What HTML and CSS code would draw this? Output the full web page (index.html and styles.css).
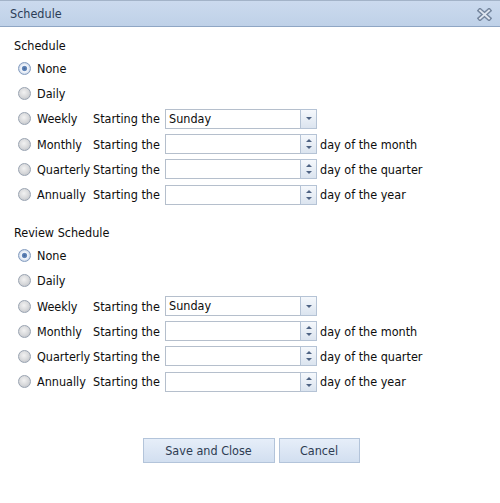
FILE: index.html
```html
<!DOCTYPE html>
<html>
<head>
<meta charset="utf-8">
<link rel="stylesheet" href="styles.css">
</head>
<body>
<div class="window">
  <div class="header">
    <span class="title">Schedule</span>
    <svg class="close" width="15" height="13" viewBox="0 0 15 13">
      <path d="M3 2.5 L12 10.5 M12 2.5 L3 10.5" stroke="#75869e" stroke-width="4.6" stroke-linecap="square" fill="none"/>
      <path d="M3 2.5 L12 10.5 M12 2.5 L3 10.5" stroke="#dfe6f0" stroke-width="1.8" stroke-linecap="square" fill="none"/>
    </svg>
  </div>
  <div class="body">
    <div class="section">
      <div class="section-label">Schedule</div>
      <div class="rows">
        <div class="row"><span class="radio checked"></span><span class="opt">None</span></div>
        <div class="row"><span class="radio"></span><span class="opt">Daily</span></div>
        <div class="row"><span class="radio"></span><span class="opt">Weekly</span><span class="start">Starting the</span><span class="field"><span class="text">Sunday</span><span class="trigger combo"><i class="down"></i></span></span></div>
        <div class="row"><span class="radio"></span><span class="opt">Monthly</span><span class="start">Starting the</span><span class="field"><span class="text"></span><span class="trigger spin"><i class="up"></i><i class="down"></i></span></span><span class="suffix">day of the month</span></div>
        <div class="row"><span class="radio"></span><span class="opt">Quarterly</span><span class="start">Starting the</span><span class="field"><span class="text"></span><span class="trigger spin"><i class="up"></i><i class="down"></i></span></span><span class="suffix">day of the quarter</span></div>
        <div class="row"><span class="radio"></span><span class="opt">Annually</span><span class="start">Starting the</span><span class="field"><span class="text"></span><span class="trigger spin"><i class="up"></i><i class="down"></i></span></span><span class="suffix">day of the year</span></div>
      </div>
    </div>
    <div class="section second">
      <div class="section-label">Review Schedule</div>
      <div class="rows">
        <div class="row"><span class="radio checked"></span><span class="opt">None</span></div>
        <div class="row"><span class="radio"></span><span class="opt">Daily</span></div>
        <div class="row"><span class="radio"></span><span class="opt">Weekly</span><span class="start">Starting the</span><span class="field"><span class="text">Sunday</span><span class="trigger combo"><i class="down"></i></span></span></div>
        <div class="row"><span class="radio"></span><span class="opt">Monthly</span><span class="start">Starting the</span><span class="field"><span class="text"></span><span class="trigger spin"><i class="up"></i><i class="down"></i></span></span><span class="suffix">day of the month</span></div>
        <div class="row"><span class="radio"></span><span class="opt">Quarterly</span><span class="start">Starting the</span><span class="field"><span class="text"></span><span class="trigger spin"><i class="up"></i><i class="down"></i></span></span><span class="suffix">day of the quarter</span></div>
        <div class="row"><span class="radio"></span><span class="opt">Annually</span><span class="start">Starting the</span><span class="field"><span class="text"></span><span class="trigger spin"><i class="up"></i><i class="down"></i></span></span><span class="suffix">day of the year</span></div>
      </div>
    </div>
    <div class="buttons">
      <button class="btn save">Save and Close</button>
      <button class="btn cancel">Cancel</button>
    </div>
  </div>
</div>
</body>
</html>
```

FILE: styles.css
```css
* { box-sizing: border-box; }
html, body { margin: 0; padding: 0; background: #fff; }
body {
  font-family: "DejaVu Sans Condensed", "DejaVu Sans", sans-serif;
  font-size: 12.5px;
  color: #0d0d0d;
  width: 500px;
  height: 503px;
  overflow: hidden;
}
.window { width: 500px; }
.header {
  height: 27px;
  border-top: 1px solid #a3b3c8;
  border-bottom: 1px solid #8fa6c4;
  background: linear-gradient(#cbdaee, #bfd1e8);
  display: flex;
  align-items: center;
  justify-content: space-between;
  padding: 0 8px 0 10px;
}
.title { color: #2c3d57; line-height: 16px; }
.close { display: block; margin-top: 1px; }
.body { padding: 0 14px; }
.section { padding-top: 11px; }
.section.second { padding-top: 18px; }
.section-label { line-height: 16px; height: 16px; }
.rows { padding-top: 2px; padding-left: 4px; }
.row {
  height: 25.2px;
  display: grid;
  grid-template-columns: 13px 62px 72px 152px auto;
  align-items: center;
}
.radio {
  width: 13px;
  height: 13px;
  border-radius: 50%;
  border: 1px solid #99a3b1;
  background: radial-gradient(circle at 45% 40%, #f2f2f2 0%, #d9dadc 50%, #b7bbc1 100%);
}
.radio.checked {
  border-color: #859dc0;
  background: radial-gradient(circle, #46699c 0, #6488bb 2.2px, #f4f7fb 3.1px, #e3eaf4 4.4px, #b3c4dc 6.5px);
}
.opt { padding-left: 6px; white-space: nowrap; }
.start { white-space: nowrap; }
.field {
  display: flex;
  height: 20px;
  width: 152px;
}
.text {
  flex: 1;
  border: 1px solid #b5bfcc;
  border-right: none;
  background: #fff;
  padding-left: 3px;
  line-height: 18px;
}
.trigger {
  width: 17px;
  border: 1px solid #b5c3d5;
  background: linear-gradient(#f5f8fc, #dbe4ef);
  display: flex;
  flex-direction: column;
  align-items: center;
  justify-content: center;
}
.trigger i {
  display: block;
  width: 0;
  height: 0;
  border-left: 3px solid transparent;
  border-right: 3px solid transparent;
}
.trigger .down { border-top: 3px solid #4e6383; }
.trigger .up { border-bottom: 3px solid #4e6383; }
.trigger.spin i { margin: 2px 0; }
.suffix { padding-left: 3px; white-space: nowrap; }
.buttons {
  display: flex;
  justify-content: center;
  gap: 4px;
  margin-top: 44px;
  padding-left: 2px;
}
.btn {
  font-family: inherit;
  font-size: 12.5px;
  color: #2d3c52;
  height: 25px;
  border: 1px solid #b3c4da;
  background: linear-gradient(#e6eef9, #d2dff0);
  padding: 0;
  margin: 0;
}
.btn.save { width: 132px; }
.btn.cancel { width: 81px; }
```
